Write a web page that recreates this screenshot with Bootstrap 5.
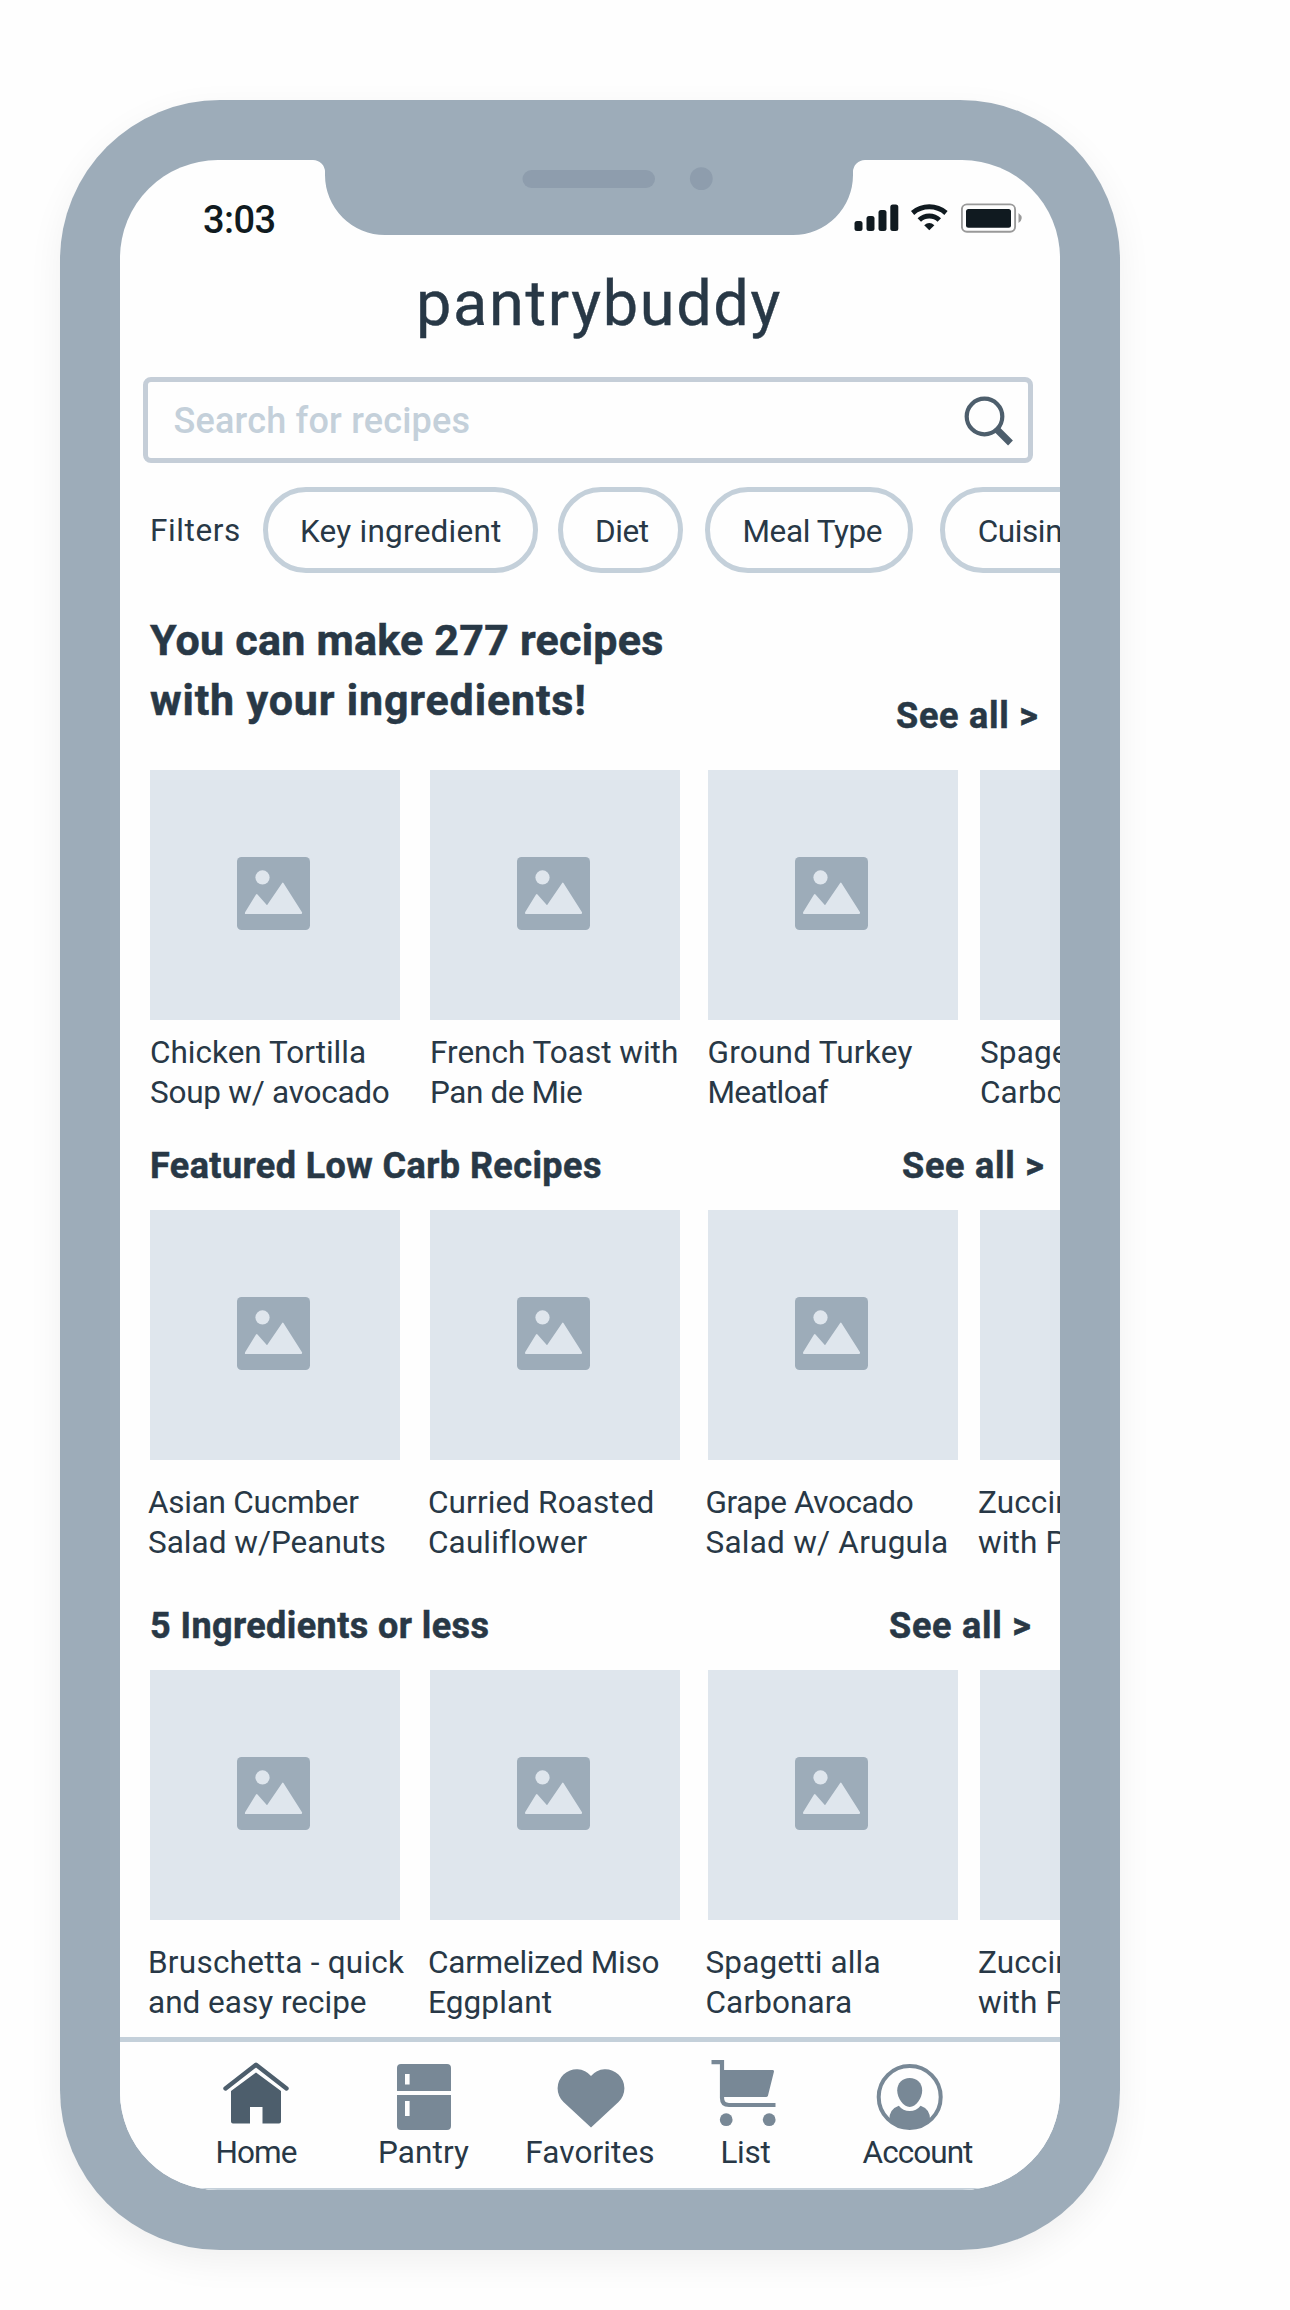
<!DOCTYPE html>
<html lang="en">
<head>
<meta charset="utf-8">
<meta name="viewport" content="width=device-width, initial-scale=1">
<title>pantrybuddy</title>
<link href="https://cdn.jsdelivr.net/npm/bootstrap@5.3.0/dist/css/bootstrap.min.css" rel="stylesheet">
<style>
  body { font-family: Roboto, "Liberation Sans", sans-serif; font-size: 31.5px; line-height: 40px; letter-spacing: .12px; color: #283846; background: #fefefe; }
  .stage { width: 1290px; height: 2310px; padding: 100px 0 0 60px; }
  .phone { width: 1060px; height: 2150px; padding: 60px; background: #9dacb9; border-radius: 160px; box-shadow: 0 12px 36px rgba(0,0,0,.06); }
  .screen { width: 940px; height: 2030px; background: #fefefe; border-radius: 98px; }
  .notch { top: 0; left: 193px; }
  .status-row { height: 106px; padding: 37px 38px 0 83px; color: #101a20; }
  .clock { font-size: 38px; line-height: 46px; font-weight: 500; letter-spacing: -.57px; }
  .status-icons { gap: 11.5px; margin: 6px -.5px 0 0; }
  .brand-title { font-size: 63px; line-height: 76px; letter-spacing: 1.66px; padding-left: 296px; margin-bottom: 35px; font-weight: 400; -webkit-text-stroke: .4px currentColor; }
  .search-box { height: 86px; width: 890px; margin-left: 22.5px; border: 5px solid #c5ced8; border-radius: 8px; padding: 2px 14.5px 0 26px; }
  .search-field { font-size: 36px; font-weight: 500; letter-spacing: .2px; color: #c4d0da; background: none; width: 600px; }
  .search-field::placeholder { color: #c4d0da; opacity: 1; }
  .filter-row { margin-top: 24px; padding-left: 30px; width: 1120px; height: 86px; }
  .filter-label { width: 112.5px; padding-top: 6px; line-height: 76px; }
  .pill { height: 86px; flex: none; line-height: 72px; border: 5px solid #c4d0da; border-radius: 43px; padding: 4px 0 0 32.5px; white-space: nowrap; }
  .pill-key { width: 275px; margin-right: 20px; }
  .pill-diet { width: 125px; margin-right: 22.5px; }
  .pill-meal { width: 207.5px; margin-right: 27.7px; }
  .pill-cuisine { width: 170px; }
  .section-head { padding-left: 30px; }
  .head-one { height: 126px; margin: 37px 0 34px; padding-right: 20px; }
  .head-two { margin: 33px 0 24px; padding-right: 14px; }
  .head-three { margin: 43px 0 24px; padding-right: 27px; }
  .head-lg { font-size: 43px; line-height: 60px; font-weight: 700; }
  .head-sm, .see-all { font-size: 36px; line-height: 40px; font-weight: 700; }
  .head-lg, .head-sm, .see-all { -webkit-text-stroke: .5px currentColor; }
  .see-all { width: 144px; letter-spacing: .75px; color: inherit; text-decoration: none; white-space: nowrap; }
  .recipe-row { padding-left: 30px; width: 1120px; }
  .recipe { width: 250px; flex: none; white-space: nowrap; }
  .recipe:nth-child(1) { margin-right: 30px; }
  .recipe:nth-child(2) { margin-right: 27.5px; }
  .recipe:nth-child(3) { margin-right: 22.5px; }
  .thumb { height: 250px; background: #dfe6ed; padding: 0 3px 3px 0; }
  .caption-a { padding-top: 13px; }
  .caption-b { padding-top: 23px; margin-left: -2px; }
  .tabs { height: 153px; border-top: 5.5px solid #c4d0da; border-bottom: 2.5px solid #c4d0da; background: #fefefe; padding: 10px 0 0 64px; }
  .tab-item { color: #788896; line-height: 40px; }
  .tab-item svg { display: block; margin: 0 auto 1px; overflow: visible; }
  .tab-item span { color: #283846; }
  .tab-home { width: 144px; } .tab-pantry { width: 191px; } .tab-fav { width: 142px; } .tab-list { width: 169px; } .tab-account { width: 175px; }
  .sp-n9 { letter-spacing: -.95px; } .sp-n6 { letter-spacing: -.63px; } .sp-n4 { letter-spacing: -.4px; } .sp-n2 { letter-spacing: -.25px; }
  .sp-0 { letter-spacing: 0; } .sp-2 { letter-spacing: .24px; } .sp-4 { letter-spacing: .42px; } .sp-6 { letter-spacing: .6px; } .sp-8 { letter-spacing: .84px; }
</style>
</head>
<body>
<svg width="0" height="0" class="position-absolute" aria-hidden="true">
  <symbol id="photo" viewBox="0 0 73 73">
    <rect width="73" height="73" rx="4.5" fill="#9dacb9"/>
    <circle cx="25.5" cy="20.4" r="7.1" fill="#dfe6ed"/>
    <path d="M8.1 55.2 19 37.600q.7-1 1.500-.2L30 48.200 45 26.200q.8-1.200 1.600 0L65 55.200q.6 1.800-1 1.800H9q-1.600 0-.9-1.800Z" fill="#dfe6ed"/>
  </symbol>
</svg>
<div class="stage">
  <div class="phone">
    <div class="screen position-relative overflow-hidden d-flex flex-column">
      <svg class="notch position-absolute" width="552" height="75" viewBox="0 0 552 75">
        <path d="M0 0A12 12 0 0 1 12 12V15A60 60 0 0 0 72 75H480A60 60 0 0 0 540 15V12A12 12 0 0 1 552 0Z" fill="#9dacb9"/>
        <rect x="209.5" y="10" width="132.500" height="18" rx="9" fill="#8e9dad"/>
        <circle cx="388.300" cy="18.600" r="11.400" fill="#8e9dad"/>
      </svg>

      <header>
        <div class="status-row d-flex justify-content-between align-items-start">
          <span class="clock">3:03</span>
          <div class="status-icons d-flex">
            <svg width="45" height="30" viewBox="0 0 45 30" fill="#101a20"><rect x=".5" y="18" width="8" height="10" rx="2.5"/><rect x="12.5" y="13" width="8" height="15" rx="2.5"/><rect x="24.5" y="7" width="8" height="21" rx="2.5"/><rect x="36.3" y="1.500" width="8" height="26.500" rx="2.5"/></svg>
            <svg width="39" height="30" viewBox="0 0 39 30"><g fill="none" stroke="#101a20" stroke-width="5"><path d="M2.600 10A25.800 25.800 0 0 1 36 10"/><path d="M9.300 17A14.500 14.500 0 0 1 29.300 17"/></g><path d="M14.200 22.200Q19.300 18 24.400 22.200L19.300 27.300Z" fill="#101a20"/></svg>
            <svg width="62" height="30" viewBox="0 0 62 30"><rect x=".9" y="1.400" width="53.200" height="27.400" rx="5" fill="none" stroke="#999" stroke-width="1.900"/><rect x="5" y="6" width="45" height="18.700" rx="2.500" fill="#101a20"/><path d="M57.500 10Q64 15 57.500 20Z" fill="#999"/></svg>
          </div>
        </div>
        <h1 class="brand-title">pantrybuddy</h1>
        <div class="search-box d-flex align-items-center justify-content-between">
          <input class="search-field border-0 p-0" type="text" placeholder="Search for recipes" aria-label="Search for recipes">
          <svg width="50" height="50" viewBox="0 0 50 50" fill="none" stroke="#4d5e6c"><circle cx="21.500" cy="20.500" r="17.800" stroke-width="4.200"/><path d="M34 33.500 47.500 47" stroke-width="6.800"/></svg>
        </div>
        <div class="filter-row d-flex">
          <span class="filter-label flex-shrink-0 sp-6">Filters</span>
          <div class="pill pill-key sp-2">Key ingredient</div>
          <div class="pill pill-diet sp-n4">Diet</div>
          <div class="pill pill-meal sp-n4">Meal Type</div>
          <div class="pill pill-cuisine sp-n4">Cuisine</div>
        </div>
      </header>

      <section>
        <div class="section-head head-one d-flex justify-content-between align-items-end">
          <h2 class="head-lg m-0 align-self-start"><span class="sp-2">You can make 277 recipes</span><br><span class="sp-8">with your ingredients!</span></h2>
          <a class="see-all" href="#">See all &gt;</a>
        </div>
        <div class="recipe-row d-flex">
          <div class="recipe"><div class="thumb d-flex align-items-center justify-content-center"><svg width="73" height="73"><use href="#photo"/></svg></div><div class="caption-a"><span class="sp-0">Chicken Tortilla</span><br><span class="sp-n2">Soup w/ avocado</span></div></div>
          <div class="recipe"><div class="thumb d-flex align-items-center justify-content-center"><svg width="73" height="73"><use href="#photo"/></svg></div><div class="caption-a"><span class="sp-0">French Toast with</span><br><span class="sp-n4">Pan de Mie</span></div></div>
          <div class="recipe"><div class="thumb d-flex align-items-center justify-content-center"><svg width="73" height="73"><use href="#photo"/></svg></div><div class="caption-a"><span class="sp-2">Ground Turkey</span><br><span class="sp-n6">Meatloaf</span></div></div>
          <div class="recipe"><div class="thumb"></div><div class="caption-a">Spagetti alla<br>Carbonara</div></div>
        </div>
      </section>

      <section>
        <div class="section-head head-two d-flex justify-content-between align-items-end">
          <h2 class="head-sm m-0 sp-4">Featured Low Carb Recipes</h2>
          <a class="see-all" href="#">See all &gt;</a>
        </div>
        <div class="recipe-row d-flex">
          <div class="recipe"><div class="thumb d-flex align-items-center justify-content-center"><svg width="73" height="73"><use href="#photo"/></svg></div><div class="caption-b"><span class="sp-n2">Asian Cucmber</span><br><span class="sp-0">Salad w/Peanuts</span></div></div>
          <div class="recipe"><div class="thumb d-flex align-items-center justify-content-center"><svg width="73" height="73"><use href="#photo"/></svg></div><div class="caption-b">Curried Roasted<br>Cauliflower</div></div>
          <div class="recipe"><div class="thumb d-flex align-items-center justify-content-center"><svg width="73" height="73"><use href="#photo"/></svg></div><div class="caption-b"><span class="sp-n4">Grape Avocado</span><br><span class="sp-2">Salad w/ Arugula</span></div></div>
          <div class="recipe"><div class="thumb"></div><div class="caption-b">Zuccini Pasta<br>with Pesto</div></div>
        </div>
      </section>

      <section>
        <div class="section-head head-three d-flex justify-content-between align-items-end">
          <h2 class="head-sm m-0 sp-4">5 Ingredients or less</h2>
          <a class="see-all" href="#">See all &gt;</a>
        </div>
        <div class="recipe-row d-flex">
          <div class="recipe"><div class="thumb d-flex align-items-center justify-content-center"><svg width="73" height="73"><use href="#photo"/></svg></div><div class="caption-b"><span class="sp-2">Bruschetta - quick</span><br><span class="sp-0">and easy recipe</span></div></div>
          <div class="recipe"><div class="thumb d-flex align-items-center justify-content-center"><svg width="73" height="73"><use href="#photo"/></svg></div><div class="caption-b"><span class="sp-n2">Carmelized Miso</span><br>Eggplant</div></div>
          <div class="recipe"><div class="thumb d-flex align-items-center justify-content-center"><svg width="73" height="73"><use href="#photo"/></svg></div><div class="caption-b">Spagetti alla<br>Carbonara</div></div>
          <div class="recipe"><div class="thumb"></div><div class="caption-b">Zuccini Pasta<br>with Pesto</div></div>
        </div>
      </section>

      <nav class="tabs d-flex mt-auto flex-shrink-0 text-center">
        <div class="tab-item tab-home">
          <svg width="80" height="80" viewBox="0 0 80 80" fill="#4d5e6c"><path d="M9.500 36.500 40 12.800 70.500 36.500" fill="none" stroke="#4d5e6c" stroke-width="4.400" stroke-linecap="round" stroke-linejoin="round"/><path d="M15 39 40 20.500 65 39V69.500Q65 71.500 63 71.500H46.500V55H34V71.500H17Q15 71.500 15 69.500Z"/></svg>
          <span class="sp-n9">Home</span>
        </div>
        <div class="tab-item tab-pantry">
          <svg width="80" height="80" viewBox="0 0 80 80" fill="currentColor"><path d="M13 39V16Q13 12 17 12H63Q67 12 67 16V39ZM13 43H67V74Q67 78 63 78H17Q13 78 13 74Z"/><path d="M21 22h4.600v10.600H21ZM21 49h4.600v15H21Z" fill="#fefefe"/></svg>
          <span>Pantry</span>
        </div>
        <div class="tab-item tab-fav">
          <svg width="80" height="80" viewBox="0 0 80 80" fill="currentColor"><path d="M41 24A18.950 18.950 0 1 0 13.500 50L41 75.500 68.500 50A18.950 18.950 0 1 0 41 24Z"/></svg>
          <span>Favorites</span>
        </div>
        <div class="tab-item tab-list">
          <svg width="80" height="80" viewBox="0 0 80 80" fill="currentColor"><path d="M5.500 10.200H16V46Q16 53 23 53H69.500" fill="none" stroke="currentColor" stroke-width="4.200"/><path d="M17 18H66.500Q68.300 18 67.900 20L62 43.500Q61.500 45 60 45H17Z"/><circle cx="20.200" cy="67.700" r="6.400"/><circle cx="63.200" cy="67.700" r="6.400"/></svg>
          <span class="sp-n2">List</span>
        </div>
        <div class="tab-item tab-account">
          <svg width="80" height="80" viewBox="0 0 80 80" fill="currentColor"><circle cx="31.700" cy="45" r="31" fill="none" stroke="currentColor" stroke-width="4"/><path d="M31.700 26C39 26 44.200 31 44.200 38.500 44.200 46 38 55 31.700 55S19.200 46 19.200 38.500C19.200 31 24.400 26 31.700 26Z"/><path d="M11.300 67.500Q11.300 57 20.800 53.700 25 59 31.700 59T42.600 53.700Q52.100 57 52.100 67.500A31 31 0 0 1 11.300 67.500Z"/></svg>
          <span class="sp-n9">Account</span>
        </div>
      </nav>
    </div>
  </div>
</div>
<script src="https://cdn.jsdelivr.net/npm/bootstrap@5.3.0/dist/js/bootstrap.bundle.min.js"></script>
</body>
</html>
